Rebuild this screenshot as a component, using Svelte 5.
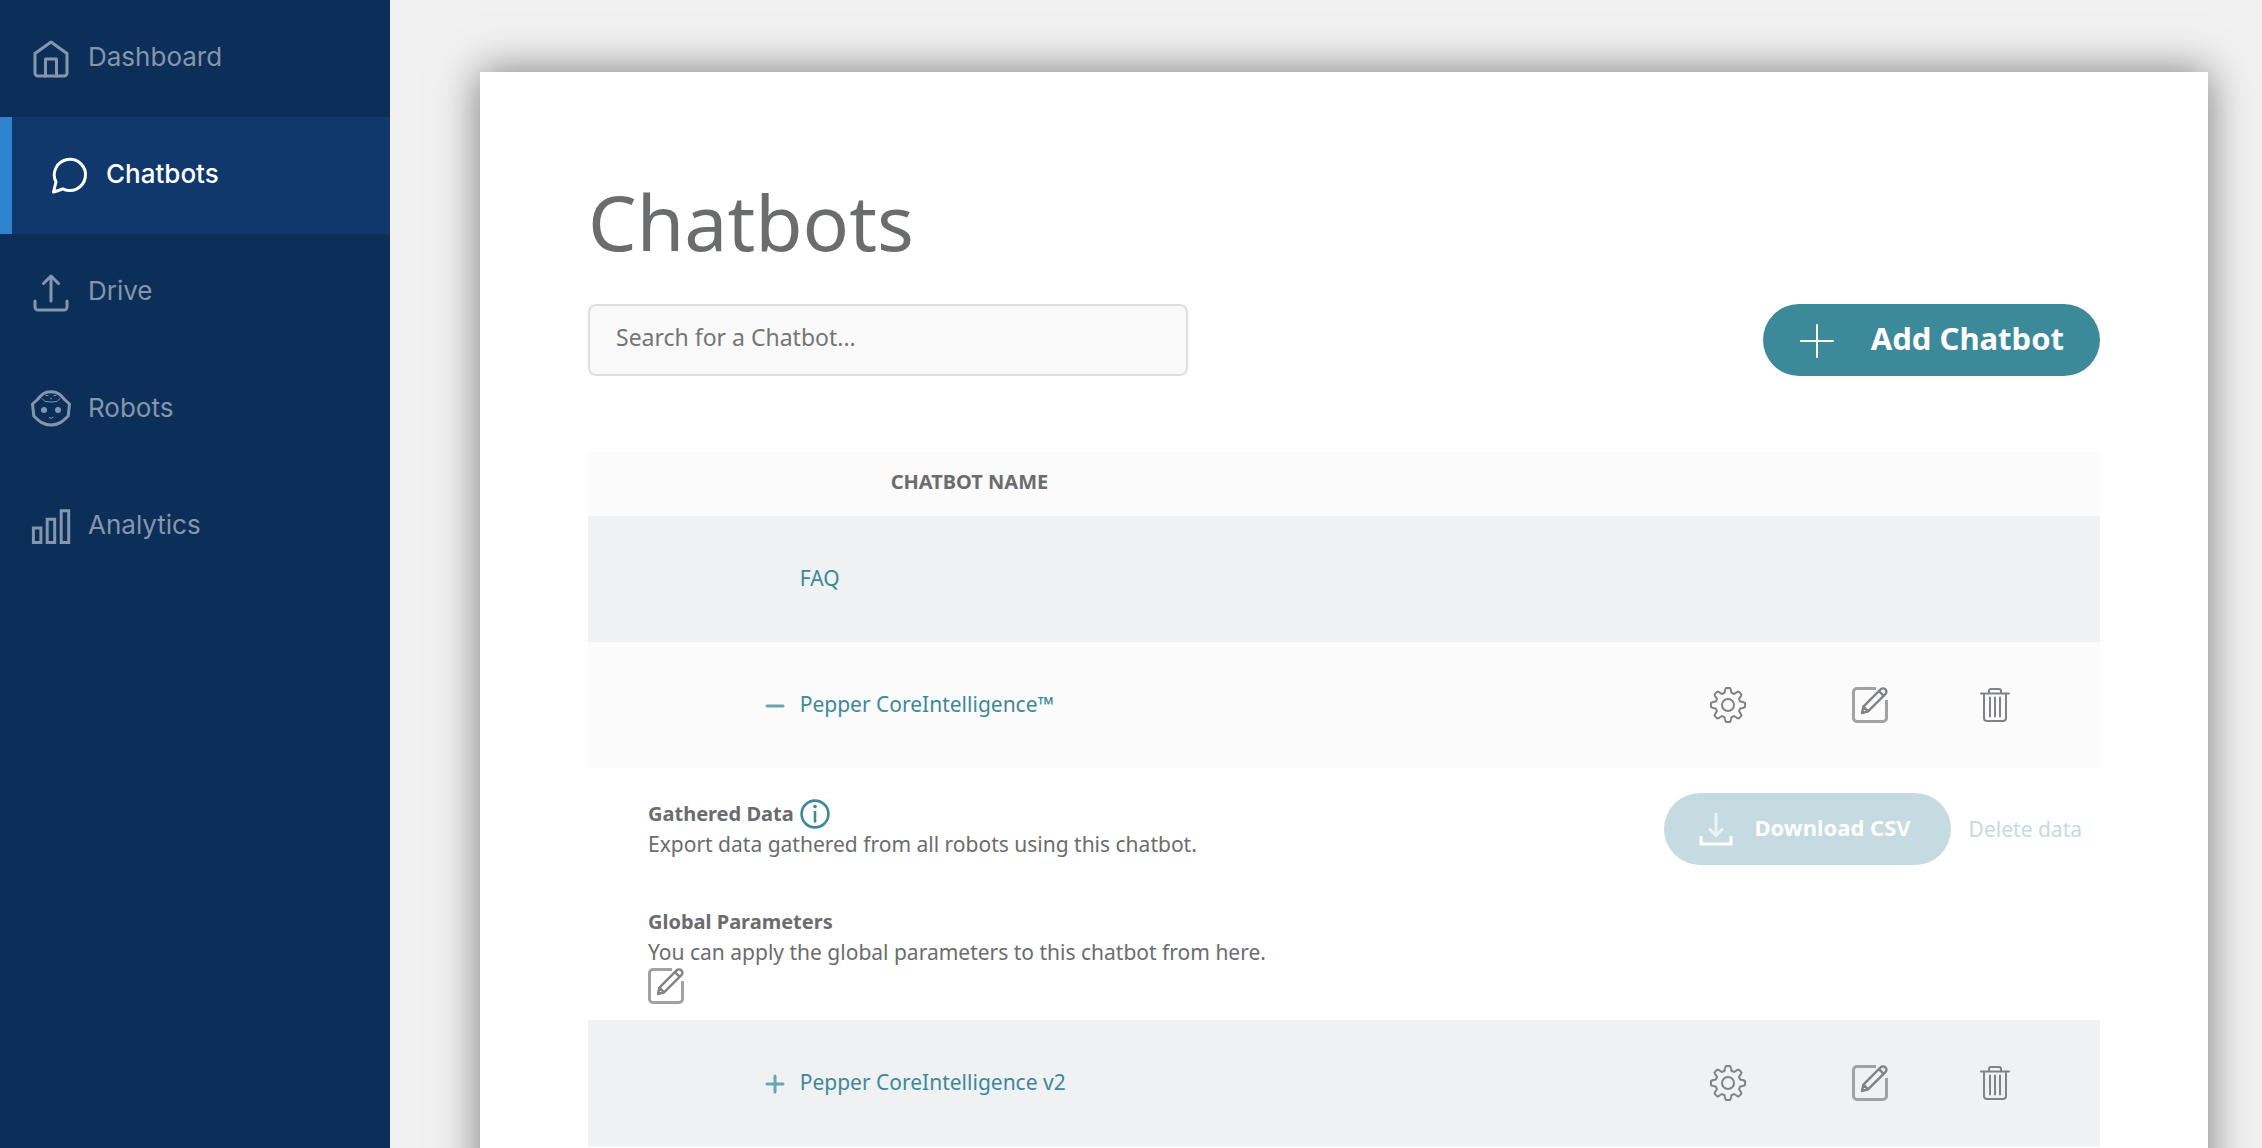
<script>
  const nav = [
    { id: 'home', label: 'Dashboard' },
    { id: 'chat', label: 'Chatbots', active: true },
    { id: 'drive', label: 'Drive' },
    { id: 'robot', label: 'Robots' },
    { id: 'bars', label: 'Analytics' },
  ];

  const rows = [
    { name: 'FAQ', shaded: true },
    { name: 'Pepper CoreIntelligence™', editable: true, open: true },
    { name: 'Pepper CoreIntelligence v2', editable: true, shaded: true },
  ];

  // Eight-toothed cog outline, flattened at tooth tips and roots.
  const cog = Array.from({ length: 160 }, (_, i) => {
    const a = (i / 160) * Math.PI * 2;
    const wave = Math.max(-1, Math.min(1, Math.cos(a * 8) * 1.7 + 0.1));
    const r = 14.8 + 2.3 * wave;
    return `${(18 + r * Math.cos(a)).toFixed(2)} ${(18 + r * Math.sin(a)).toFixed(2)}`;
  }).join('L');
</script>

{#snippet editIcon()}
  <svg class="icon" viewBox="0 0 36 36" aria-hidden="true">
    <path class="frame" d="M24 1.5H5A3.5 3.5 0 0 0 1.500 5v26A3.500 3.500 0 0 0 5 34.500h26a3.500 3.500 0 0 0 3.500-3.500V13" />
    <path class="pencil" d="M10 26l1.400-6.400L28.600 2.400a3.300 3.300 0 0 1 4.800 4.800L16 24.400zM11.400 19.600l4.600 4.800M27 4.200l4.600 4.600" />
  </svg>
{/snippet}

<div class="app">
  <nav class="sidebar" aria-label="Main">
    {#each nav as item}
      <a href="#{item.id}" class="nav-item" class:active={item.active}>
        <svg class="nav-icon" viewBox="0 0 38 38" aria-hidden="true">
          {#if item.id === 'home'}
            <path d="M3 13.500L19 2l16 11.500V33a3 3 0 0 1-3 3H6a3 3 0 0 1-3-3z" />
            <path d="M13.500 36V19h11v17" />
          {:else if item.id === 'chat'}
            <path d="M3.500 35L6 25A15.600 15.600 0 1 1 12.800 31.800Q9 33.400 3.500 35z" />
          {:else if item.id === 'drive'}
            <path d="M19 4v23M11.500 9.500L19 2l7.500 7.500M3 27v6a3 3 0 0 0 3 3h26a3 3 0 0 0 3-3v-6" />
          {:else if item.id === 'robot'}
            <path class="thin" d="M19 .8C26 .8 29 4 32.500 8.500l5 4.500L36.200 25c-5 5-9.200 9-17.200 9S6.800 30 1.800 25L.5 13l5-4.500C9 4 12 .8 19 .8z" />
            <path class="hair" d="M10 7.500l3 3q6 1 12 0l3-3M14 4.500h2M22 4.500h2M17 26.500q2 2 4 0" />
            <circle class="dot" cx="12" cy="19" r="3" />
            <circle class="dot" cx="26" cy="19" r="3" />
            <circle class="dot" cx="19" cy="7.500" r=".8" />
          {:else}
            <path class="thin sharp" d="M1.400 20h7.500v14.600H1.400zM15.200 11.200h7.500v23.400h-7.500zM29.200 2.800h7.500v31.800h-7.500z" />
          {/if}
        </svg>
        <span>{item.label}</span>
      </a>
    {/each}
  </nav>

  <main>
    <section class="card">
      <h1>Chatbots</h1>
      <div class="toolbar">
        <input type="search" aria-label="Search for a Chatbot" placeholder="Search for a Chatbot..." />
        <button type="button" class="pill add">
          <svg class="icon" viewBox="0 0 36 36" aria-hidden="true"><path d="M18 3v32M2 19h32" /></svg>
          <span>Add Chatbot</span>
        </button>
      </div>

      <table>
        <colgroup>
          <col class="col-toggle" /><col /><col class="col-settings" /><col class="col-edit" /><col class="col-delete" />
        </colgroup>
        <thead>
          <tr><td></td><th scope="col">CHATBOT NAME</th><td colspan="3"></td></tr>
        </thead>
        <tbody>
          {#each rows as row}
            <tr class="bot" class:shaded={row.shaded}>
              <td class="toggle">
                {#if row.editable}
                  <button type="button" aria-label={row.open ? 'Collapse' : 'Expand'}>
                    <svg viewBox="0 0 18 18" aria-hidden="true"><path d={row.open ? 'M1 10h16' : 'M1 10h16M9 2v16'} /></svg>
                  </button>
                {/if}
              </td>
              <td class="name"><a href="#bot">{row.name}</a></td>
              {#if row.editable}
                <td class="action">
                  <button type="button" aria-label="Settings">
                    <svg class="icon" viewBox="0 0 36 36" aria-hidden="true"><path d="M{cog}Z" /><circle cx="18" cy="18" r="6" /></svg>
                  </button>
                </td>
                <td class="action"><button type="button" aria-label="Edit">{@render editIcon()}</button></td>
                <td class="action last">
                  <button type="button" aria-label="Delete">
                    <svg class="icon" viewBox="0 0 36 36" aria-hidden="true">
                      <path d="M4 6.500h28M12 6V4a2 2 0 0 1 2-2h8a2 2 0 0 1 2 2v2M7 7v24a3 3 0 0 0 3 3h16a3 3 0 0 0 3-3V7" />
                      <path class="rib" d="M13 10.500v19M18 10.500v19M23 10.500v19" />
                    </svg>
                  </button>
                </td>
              {:else}
                <td colspan="3"></td>
              {/if}
            </tr>
            {#if row.open}
              <tr class="details">
                <td colspan="5">
                  <div class="gathered">
                    <div>
                      <h2>
                        Gathered Data
                        <svg class="info" viewBox="0 0 30 30" aria-hidden="true">
                          <circle cx="15" cy="15" r="13.400" /><path d="M15 12v11.500" /><circle class="point" cx="15" cy="7.600" r="1.800" />
                        </svg>
                      </h2>
                      <p>Export data gathered from all robots using this chatbot.</p>
                    </div>
                    <div class="data-actions">
                      <button type="button" class="pill download" disabled>
                        <svg viewBox="0 0 32 32" aria-hidden="true">
                          <path class="faint" d="M16 0v22M9 15.500l7 7 7-7" /><path d="M1 23v8h30v-8" />
                        </svg>
                        <span>Download CSV</span>
                      </button>
                      <button type="button" class="delete-data" disabled>Delete data</button>
                    </div>
                  </div>
                  <div class="globals">
                    <h2>Global Parameters</h2>
                    <p>You can apply the global parameters to this chatbot from here.</p>
                    <button type="button" aria-label="Edit global parameters">{@render editIcon()}</button>
                  </div>
                </td>
              </tr>
            {/if}
          {/each}
          <tr class="bot"><td colspan="5"></td></tr>
        </tbody>
      </table>
    </section>
  </main>
</div>

<style>
  :global(body) { margin: 0; background: #f1f1f1; }

  .app {
    display: flex;
    height: 100vh;
    overflow: hidden;
    font-family: "Noto Sans", sans-serif;
    font-size: 21px;
    line-height: 30px;
    color: #6b6c6e;
  }

  svg { display: block; fill: none; stroke: currentColor; overflow: visible; }
  button { padding: 0; border: 0; background: none; font: inherit; color: inherit; }
  a { text-decoration: none; }

  .sidebar { flex: 0 0 390px; background: #0c2f59; }
  .nav-item {
    display: flex;
    align-items: center;
    gap: 18px;
    box-sizing: border-box;
    height: 117px;
    padding-left: 32px;
    font-family: Inter, sans-serif;
    font-size: 26px;
    color: #8596ab;
  }
  .nav-item span { padding-bottom: 3px; }
  .nav-item.active {
    padding-left: 38px;
    border-left: 12px solid #3182ce;
    background: #10386c;
    font-weight: 500;
    color: #fff;
  }
  .nav-icon { width: 38px; height: 38px; stroke-width: 3; stroke-linejoin: round; stroke-linecap: round; }
  .nav-icon .hair { stroke-width: 1; }
  .nav-icon .sharp { stroke-linejoin: miter; }
  .nav-icon .dot { fill: currentColor; stroke: none; }

  main { flex: 1; min-width: 0; padding: 72px 54px 0 90px; }
  .card { padding: 98px 108px 60px; background: #fff; box-shadow: 0 0 40px rgba(0, 0, 0, 0.5); }
  h1 { margin: 0 0 30px; font-size: 77px; font-weight: 400; line-height: 104px; }

  .toolbar { display: flex; justify-content: space-between; align-items: center; margin-bottom: 76px; }
  input {
    box-sizing: border-box;
    width: 600px;
    height: 72px;
    padding: 0 26px 6px;
    border: 2px solid #dedede;
    border-radius: 8px;
    background: #f9f9f9;
    font: inherit;
    font-size: 23px;
    color: #6b6c6e;
    appearance: none;
  }
  input::placeholder { color: #757575; opacity: 1; }

  .pill { display: flex; align-items: center; height: 72px; border-radius: 36px; font-weight: 700; color: #fff; }
  .pill span { padding-bottom: 4px; }
  .add { gap: 36px; padding: 0 36px; background: #3c8999; font-size: 31px; }
  .add .icon { stroke: #fff; stroke-width: 2; }
  .download { gap: 22px; padding: 0 40px 0 36px; background: #c5dbe1; font-size: 22px; }
  .download svg { width: 32px; height: 32px; stroke-width: 3; }
  .download .faint { opacity: 0.65; }

  table { width: 100%; table-layout: fixed; border-collapse: collapse; }
  .col-toggle { width: 14%; }
  .col-settings { width: 148px; }
  .col-edit { width: 136px; }
  .col-delete { width: 162px; }
  th, td { padding: 0; text-align: left; }
  thead tr { height: 64px; background: #fbfbfb; }
  th { padding: 0 0 4px 91px; font-size: 20px; }
  .bot { height: 126px; background: #fbfbfb; }
  .shaded { background: #eff1f3; }
  .name { padding-bottom: 3px; }
  .bot a { color: #3c8999; }
  .toggle button { margin: 0 16px 0 auto; display: block; }
  .toggle svg { width: 18px; height: 18px; stroke: #6ba5b2; stroke-width: 3; stroke-linecap: round; }
  .action button { display: block; margin: 0 auto; }
  .last { padding-right: 48px; }
  .icon { width: 36px; height: 36px; stroke: #808285; stroke-width: 2; stroke-linejoin: round; stroke-linecap: round; }
  .icon .frame { stroke: #a0a2a4; stroke-width: 3; stroke-linecap: butt; }
  .icon .pencil { stroke-width: 2.400; }

  .details td { padding: 25px 18px 16px 60px; }
  .gathered { display: flex; justify-content: space-between; align-items: center; margin-bottom: 42px; }
  h2 { display: flex; gap: 6px; margin: 0; font-size: 20px; line-height: 30px; }
  p { margin: 0 0 1px; }
  .info { width: 30px; height: 30px; stroke: #3c8999; stroke-width: 2.600; }
  .info .point { fill: #3c8999; stroke: none; }
  .data-actions { display: flex; align-items: center; gap: 18px; }
  .delete-data { color: #c5dbe1; }
  .globals button { display: block; }
</style>
